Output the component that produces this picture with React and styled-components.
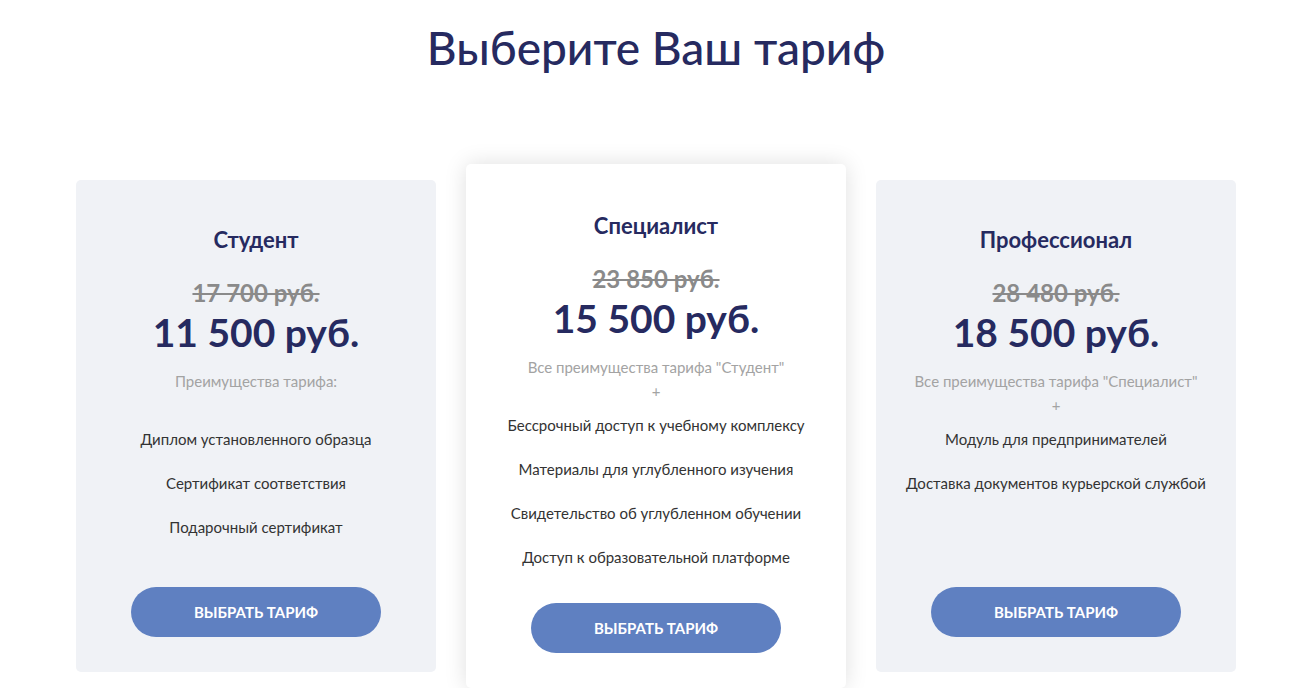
import React from "react";
import styled, { createGlobalStyle } from "styled-components";

const Global = createGlobalStyle`
  html, body { margin: 0; padding: 0; background: #ffffff; }
  body { font-family: "Lato", "Noto Sans", sans-serif; }
  * { box-sizing: border-box; }
`;

const Page = styled.div`
  width: 1297px;
  padding-left: 15px;
`;

const Container = styled.div`
  width: 1160px;
  margin: 0 auto;
`;

const Heading = styled.h1`
  margin: 0;
  padding-top: 20px;
  text-align: center;
  font-size: 46px;
  line-height: 56px;
  font-weight: 500;
  color: #262a60;
`;

const Row = styled.div`
  display: flex;
  gap: 30px;
  margin-top: 88px;
  align-items: stretch;
`;

const Card = styled.div`
  flex: 0 0 ${(p) => (p.$featured ? "380px" : "360px")};
  margin: ${(p) => (p.$featured ? "0" : "16px 0")};
  background: ${(p) => (p.$featured ? "#ffffff" : "#f0f2f6")};
  box-shadow: ${(p) => (p.$featured ? "0 0 22px rgba(0,0,0,0.13)" : "none")};
  border-radius: 5px;
  padding: ${(p) => (p.$featured ? "48px" : "46px")} 20px 35px;
  display: flex;
  flex-direction: column;
  align-items: center;
  text-align: center;
`;

const Name = styled.div`
  font-size: 22px;
  line-height: 27px;
  font-weight: 700;
  color: #262a60;
`;

const OldPrice = styled.div`
  margin-top: 26px;
  font-size: 24px;
  line-height: 28px;
  font-weight: 700;
  color: #8a8a8a;
  text-decoration: line-through;
`;

const Price = styled.div`
  font-size: 39px;
  line-height: 50px;
  font-weight: 700;
  color: #262a60;
`;

const Perks = styled.div`
  margin-top: 12px;
  font-size: 15px;
  line-height: 24px;
  color: #a3a3a3;
`;

const Features = styled.ul`
  list-style: none;
  margin: 10px 0 0;
  padding: 0;
`;

const Feature = styled.li`
  font-size: 15px;
  line-height: 24px;
  color: #333333;
  & + & { margin-top: 20px; }
`;

const Button = styled.button`
  margin-top: auto;
  width: 250px;
  height: 50px;
  border: none;
  border-radius: 25px;
  background: #5f80c1;
  color: #ffffff;
  font-family: inherit;
  font-size: 15px;
  font-weight: 700;
  text-transform: uppercase;
  cursor: pointer;
`;

const ButtonSpacer = styled.div`
  height: 34px;
  flex: 0 0 auto;
`;

const plans = [
  {
    name: "Студент",
    old: "17 700 руб.",
    price: "11 500 руб.",
    perks: ["Преимущества тарифа:", "\u00a0"],
    features: ["Диплом установленного образца", "Сертификат соответствия", "Подарочный сертификат"],
  },
  {
    name: "Специалист",
    old: "23 850 руб.",
    price: "15 500 руб.",
    featured: true,
    perks: ['Все преимущества тарифа "Студент"', "+"],
    features: [
      "Бессрочный доступ к учебному комплексу",
      "Материалы для углубленного изучения",
      "Свидетельство об углубленном обучении",
      "Доступ к образовательной платформе",
    ],
  },
  {
    name: "Профессионал",
    old: "28 480 руб.",
    price: "18 500 руб.",
    perks: ['Все преимущества тарифа "Специалист"', "+"],
    features: ["Модуль для предпринимателей", "Доставка документов курьерской службой"],
  },
];

export default function App() {
  return (
    <>
      <Global />
      <Page>
        <Container>
          <Heading>Выберите Ваш тариф</Heading>
          <Row>
            {plans.map((p) => (
              <Card key={p.name} $featured={p.featured}>
                <Name>{p.name}</Name>
                <OldPrice>{p.old}</OldPrice>
                <Price>{p.price}</Price>
                <Perks>
                  {p.perks.map((l, i) => (
                    <div key={i}>{l}</div>
                  ))}
                </Perks>
                <Features>
                  {p.features.map((f) => (
                    <Feature key={f}>{f}</Feature>
                  ))}
                </Features>
                <ButtonSpacer />
                <Button>Выбрать тариф</Button>
              </Card>
            ))}
          </Row>
        </Container>
      </Page>
    </>
  );
}
